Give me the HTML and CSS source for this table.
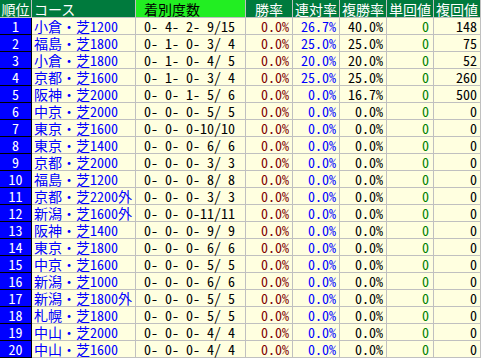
FILE: index.html
```html
<!DOCTYPE html>
<html lang="ja">
<head>
<meta charset="utf-8">
<link rel="stylesheet" href="styles.css">
</head>
<body>
<table class="stats">
<thead>
<tr>
<th class="c-rank">順位</th>
<th class="c-course">コース</th>
<th class="c-rec">着別度数</th>
<th class="c-num">勝率</th>
<th class="c-num">連対率</th>
<th class="c-num">複勝率</th>
<th class="c-num">単回値</th>
<th class="c-num">複回値</th>
</tr>
</thead>
<tbody>
<tr><td class="rank">1</td><td class="course">小倉・芝1200</td><td class="rec">0- 4- 2- 9/15</td><td class="win">0.0%</td><td class="ren">26.7%</td><td class="fuku">40.0%</td><td class="tan">0</td><td class="fret">148</td></tr>
<tr><td class="rank">2</td><td class="course">福島・芝1800</td><td class="rec">0- 1- 0- 3/ 4</td><td class="win">0.0%</td><td class="ren">25.0%</td><td class="fuku">25.0%</td><td class="tan">0</td><td class="fret">75</td></tr>
<tr><td class="rank">3</td><td class="course">小倉・芝1800</td><td class="rec">0- 1- 0- 4/ 5</td><td class="win">0.0%</td><td class="ren">20.0%</td><td class="fuku">20.0%</td><td class="tan">0</td><td class="fret">52</td></tr>
<tr><td class="rank">4</td><td class="course">京都・芝1600</td><td class="rec">0- 1- 0- 3/ 4</td><td class="win">0.0%</td><td class="ren">25.0%</td><td class="fuku">25.0%</td><td class="tan">0</td><td class="fret">260</td></tr>
<tr><td class="rank">5</td><td class="course">阪神・芝2000</td><td class="rec">0- 0- 1- 5/ 6</td><td class="win">0.0%</td><td class="ren">0.0%</td><td class="fuku">16.7%</td><td class="tan">0</td><td class="fret">500</td></tr>
<tr><td class="rank">6</td><td class="course">中京・芝2000</td><td class="rec">0- 0- 0- 5/ 5</td><td class="win">0.0%</td><td class="ren">0.0%</td><td class="fuku">0.0%</td><td class="tan">0</td><td class="fret">0</td></tr>
<tr><td class="rank">7</td><td class="course">東京・芝1600</td><td class="rec">0- 0- 0-10/10</td><td class="win">0.0%</td><td class="ren">0.0%</td><td class="fuku">0.0%</td><td class="tan">0</td><td class="fret">0</td></tr>
<tr><td class="rank">8</td><td class="course">東京・芝1400</td><td class="rec">0- 0- 0- 6/ 6</td><td class="win">0.0%</td><td class="ren">0.0%</td><td class="fuku">0.0%</td><td class="tan">0</td><td class="fret">0</td></tr>
<tr><td class="rank">9</td><td class="course">京都・芝2000</td><td class="rec">0- 0- 0- 3/ 3</td><td class="win">0.0%</td><td class="ren">0.0%</td><td class="fuku">0.0%</td><td class="tan">0</td><td class="fret">0</td></tr>
<tr><td class="rank">10</td><td class="course">福島・芝1200</td><td class="rec">0- 0- 0- 8/ 8</td><td class="win">0.0%</td><td class="ren">0.0%</td><td class="fuku">0.0%</td><td class="tan">0</td><td class="fret">0</td></tr>
<tr><td class="rank">11</td><td class="course">京都・芝2200外</td><td class="rec">0- 0- 0- 3/ 3</td><td class="win">0.0%</td><td class="ren">0.0%</td><td class="fuku">0.0%</td><td class="tan">0</td><td class="fret">0</td></tr>
<tr><td class="rank">12</td><td class="course">新潟・芝1600外</td><td class="rec">0- 0- 0-11/11</td><td class="win">0.0%</td><td class="ren">0.0%</td><td class="fuku">0.0%</td><td class="tan">0</td><td class="fret">0</td></tr>
<tr><td class="rank">13</td><td class="course">阪神・芝1400</td><td class="rec">0- 0- 0- 9/ 9</td><td class="win">0.0%</td><td class="ren">0.0%</td><td class="fuku">0.0%</td><td class="tan">0</td><td class="fret">0</td></tr>
<tr><td class="rank">14</td><td class="course">東京・芝1800</td><td class="rec">0- 0- 0- 6/ 6</td><td class="win">0.0%</td><td class="ren">0.0%</td><td class="fuku">0.0%</td><td class="tan">0</td><td class="fret">0</td></tr>
<tr><td class="rank">15</td><td class="course">中京・芝1600</td><td class="rec">0- 0- 0- 5/ 5</td><td class="win">0.0%</td><td class="ren">0.0%</td><td class="fuku">0.0%</td><td class="tan">0</td><td class="fret">0</td></tr>
<tr><td class="rank">16</td><td class="course">新潟・芝1000</td><td class="rec">0- 0- 0- 6/ 6</td><td class="win">0.0%</td><td class="ren">0.0%</td><td class="fuku">0.0%</td><td class="tan">0</td><td class="fret">0</td></tr>
<tr><td class="rank">17</td><td class="course">新潟・芝1800外</td><td class="rec">0- 0- 0- 5/ 5</td><td class="win">0.0%</td><td class="ren">0.0%</td><td class="fuku">0.0%</td><td class="tan">0</td><td class="fret">0</td></tr>
<tr><td class="rank">18</td><td class="course">札幌・芝1800</td><td class="rec">0- 0- 0- 5/ 5</td><td class="win">0.0%</td><td class="ren">0.0%</td><td class="fuku">0.0%</td><td class="tan">0</td><td class="fret">0</td></tr>
<tr><td class="rank">19</td><td class="course">中山・芝2000</td><td class="rec">0- 0- 0- 4/ 4</td><td class="win">0.0%</td><td class="ren">0.0%</td><td class="fuku">0.0%</td><td class="tan">0</td><td class="fret">0</td></tr>
<tr><td class="rank">20</td><td class="course">中山・芝1600</td><td class="rec">0- 0- 0- 4/ 4</td><td class="win">0.0%</td><td class="ren">0.0%</td><td class="fuku">0.0%</td><td class="tan">0</td><td class="fret">0</td></tr>
</tbody>
</table>
</body>
</html>
```

FILE: styles.css
```css
html, body {
  margin: 0;
  padding: 0;
  background: #ffffff;
}

.stats {
  border-collapse: separate;
  border-spacing: 0;
  table-layout: fixed;
  width: 481px;
  font-family: "Noto Sans CJK JP", sans-serif;
  font-feature-settings: "hwid" 1;
  font-size: 14px;
  line-height: 16px;
}

.stats th,
.stats td {
  box-sizing: border-box;
  padding: 0 3px 0 0;
  border-right: 1px solid #c0c0c0;
  border-bottom: 1px solid #c0c0c0;
  white-space: pre;
  font-weight: normal;
}

.stats th {
  height: 18px;
  background: #007a3d;
  color: #ffffff;
  text-align: center;
  padding: 0;
}

.stats td {
  height: 17px;
  background: #ffffe0;
  text-align: right;
}

.stats th.c-rank { width: 32px; }
.stats th.c-course { width: 104px; text-align: left; padding-left: 2px; }
.stats th.c-rec { width: 110px; text-align: left; padding-left: 8px; background: #22ee22; color: #000000; }
.stats th.c-num { width: 47px; }

.stats td.rank {
  background: #0000ff;
  color: #ffffff;
  text-align: center;
  padding: 0;
  border-right-color: #000000;
  border-bottom-color: #000000;
}

.stats td.course {
  text-align: left;
  padding-left: 2px;
  color: #0000ff;
}

.stats td.rec {
  text-align: left;
  padding-left: 8px;
  color: #000000;
}

.stats td.win { color: #800000; }
.stats td.ren { color: #0000ff; }
.stats td.fuku { color: #000000; }
.stats td.tan { color: #008000; padding-right: 4px; }
.stats td.fret { color: #000000; }
```
